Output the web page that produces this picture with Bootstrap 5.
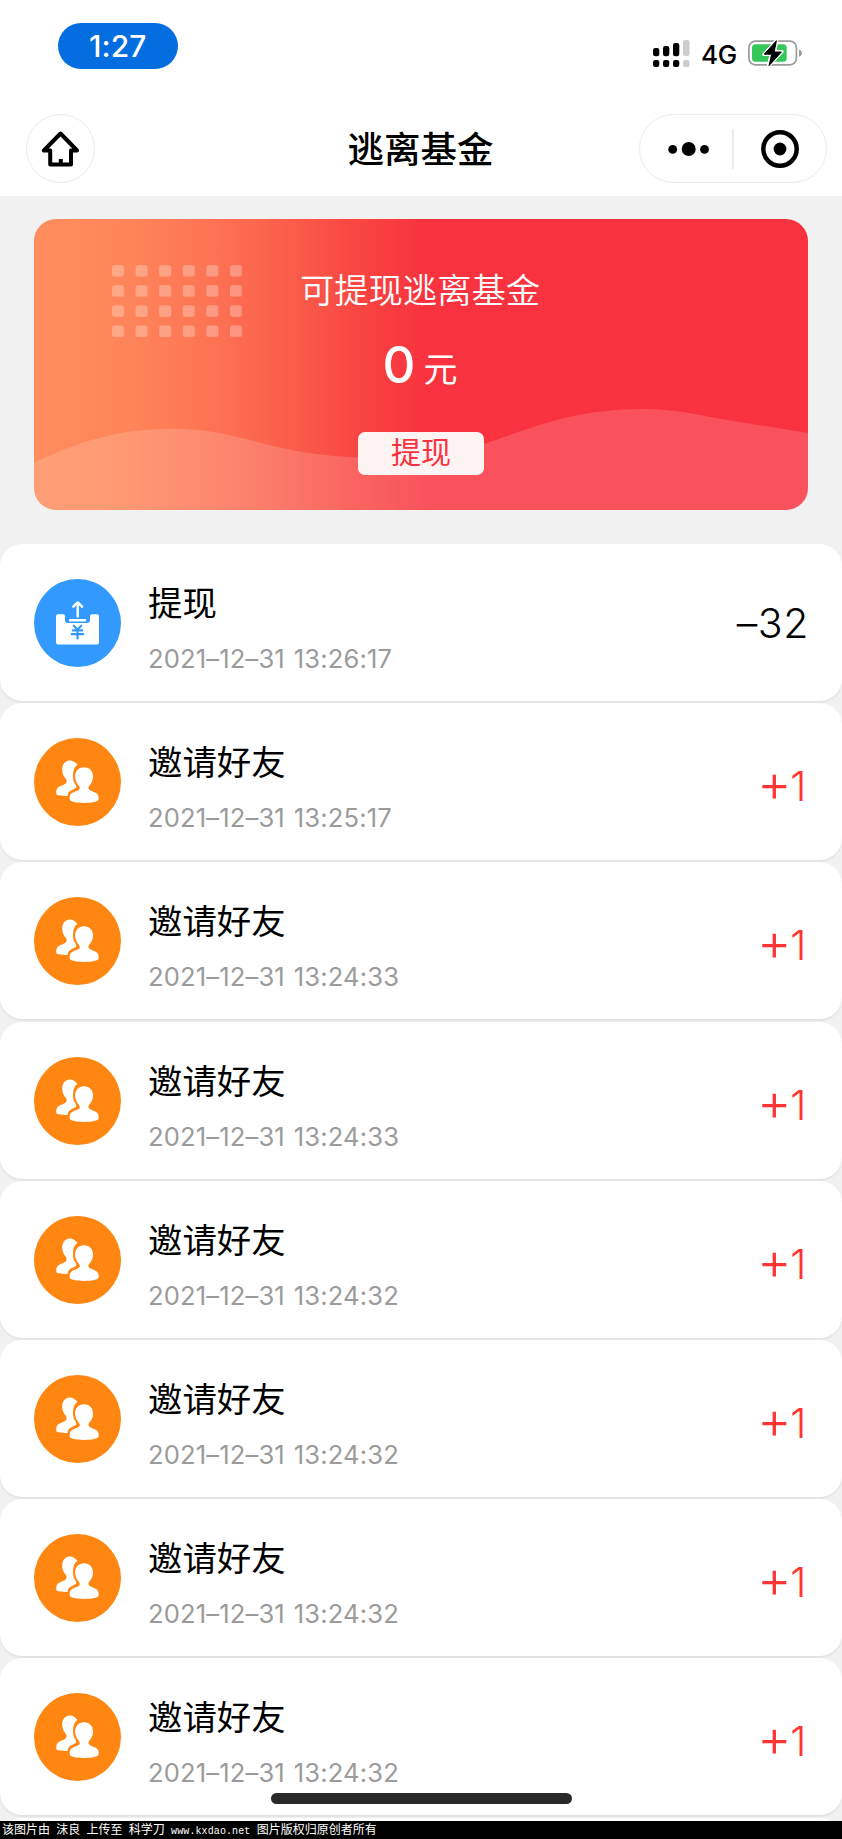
<!DOCTYPE html>
<html lang="zh-CN">
<head>
<meta charset="utf-8">
<meta name="viewport" content="width=device-width, initial-scale=1">
<title>逃离基金</title>
<link href="https://cdn.jsdelivr.net/npm/bootstrap@5.3.0/dist/css/bootstrap.min.css" rel="stylesheet">
<style>
body{font-family:Inter,"Noto Sans CJK SC",sans-serif;background:#f1f1f1;color:#000;line-height:1}
.screen{height:1839px}
.top-area{height:196px}
.status-row{height:92px;padding:23px 39px 0 58px}
.clock{width:119.5px;height:46px;border-radius:23px;background:#046de0;font-size:30px;font-weight:500;letter-spacing:.1px}
.status-icons{height:52px;padding-top:17px}
.net{font-size:26px;font-weight:500;width:36px;margin:0 11px 0 11px;letter-spacing:-.4px;line-height:28px;padding-top:1px}
.title-row{height:104px;padding:22px 15px 13px 26px}
.home-btn{width:69px;height:69px;border:1px solid #ebebeb}
.page-title{font-size:36.5px;font-weight:500;line-height:40px;margin:3px 12px 0 0}
.capsule{width:188px;height:69px;border:1px solid #ebebeb;border-radius:35px}
.side{width:188px}
.fund{margin:23px 34px 0;height:291px;border-radius:22px;background:linear-gradient(90deg,#ff8d5d 0%,#fe8559 12%,#fd7554 22%,#fa5d4b 33%,#f84341 43%,#f8323e 51%)}
.fund-body{padding-top:52px;color:#fff}
.fund-label{font-size:34.3px;line-height:40px;font-weight:350;margin-left:-2px}
.fund-sum{height:50px;margin-top:29px;margin-left:-2px}
.fund-num{font-size:51px;font-weight:550;line-height:50px;width:31px;letter-spacing:-1px}
.fund-unit{font-size:34px;line-height:40px;margin-left:10px;padding-top:10px}
.take{width:126px;height:43px;border-radius:7px;background:#fff4f4;color:#f8323f;font-size:30px;line-height:40px;margin-top:42px;padding:0 0 3px;border:0}
.take:hover{background:#fff;color:#f8323f}
.records{margin-top:34px;gap:2.2px}
.record{height:157px;flex:none;background:#fff;border-radius:22px;padding:35px 35px 0 34px;box-shadow:0 2px 2px rgba(0,0,0,.06)}
.avatar{width:87px;height:88px;flex:none}
.kind{font-size:34.4px;line-height:40px;margin:5px 0 0 27px}
.stamp{font-size:25.6px;font-weight:400;line-height:30px;color:#9b9b9b;margin:20px 0 0 27px;letter-spacing:.13px;word-spacing:1.5px}
.amount{font-size:41px;font-weight:300;line-height:50px;height:50px;margin-top:19px;margin-right:-2px;letter-spacing:.6px}
.plus .amount{color:#ff3434;margin-top:23px;margin-right:0}
.sign{font-size:53px;font-weight:300;line-height:40px;position:relative;top:1px;margin-right:-2px}
.home-bar{left:271px;top:1793px;width:301px;height:11px;border-radius:6px;background:#292929}
.credit{height:18px;left:0;bottom:0;background:#000;color:#fff;font-size:12px;line-height:18px;padding-left:2px;word-spacing:2.9px;white-space:nowrap}
.credit span{font-family:"Liberation Mono",monospace;font-size:10px;letter-spacing:.1px}
</style>
</head>
<body>
<svg width="0" height="0" class="position-absolute" aria-hidden="true">
  <symbol id="friends" viewBox="0 0 87 88">
    <ellipse cx="43.5" cy="44" rx="43.5" ry="44" fill="#ff8611"/>
    <path fill="#fff" d="M43.5 27C41.5 24 38.5 22.2 35.5 22.4C30.5 22.8 28 27 28.2 32C28.3 36 30 39 32 41C33 43 32.8 45 31 46C27.5 48 23 48.5 22.3 53V56C22.3 57.3 27 57.8 33.5 58C33.8 55 35 53.4 37.5 52.2L42.2 49.8C42.6 48 41.5 46.5 40 44.2C38.2 39 38.5 29.7 43.5 27Z"/>
    <path fill="#fff" d="M50.2 29.2C44.5 29.2 41 33.2 41.1 38.6C41.2 43 43 46 45.1 48C46.2 50 46 51.5 43.8 52.6C40.5 54.2 35.9 54.8 35.7 59.3V61.5C35.7 66 64.6 66 64.6 61.5V59.3C64.4 54.8 60 54.2 56.5 52.5C54.2 51.3 54 50 55 48C57.5 45.5 59 42.5 59 38.6C59 33.2 55.7 29.2 50.2 29.2Z"/>
  </symbol>
  <symbol id="withdraw" viewBox="0 0 87 88">
    <ellipse cx="43.5" cy="44" rx="43.5" ry="44" fill="#329aff"/>
    <path fill="#fff" d="M24 35.3H29Q31 35.3 31 37.3V41Q31 44 34 44H53Q56 44 56 41V37.3Q56 35.3 58 35.3H63Q65 35.3 65 37.3V63.4Q65 65.4 63 65.4H24Q22 65.4 22 63.4V37.3Q22 35.3 24 35.3Z"/>
    <path d="M35 41.3H52" stroke="#329aff" stroke-width="5"/>
    <path d="M36 41.3H51.2M43.7 37.5V24M39.3 27.7L43.7 23.4L48.1 27.7" fill="none" stroke="#fff" stroke-width="2.4" stroke-linecap="round" stroke-linejoin="round"/>
    <path d="M39.8 46.8L43.5 50.8L47.2 46.8M38.8 51.4H48.2M37.8 55.2H49.2M43.5 51V59.5" fill="none" stroke="#329aff" stroke-width="2.2" stroke-linecap="round"/>
  </symbol>
</svg>
<main class="screen position-relative overflow-hidden">
  <header class="top-area bg-white">
    <div class="status-row d-flex justify-content-between align-items-start">
      <div class="clock text-white d-flex align-items-center justify-content-center">1:27</div>
      <div class="status-icons d-flex align-items-start">
        <svg width="37" height="27" viewBox="0 0 37 27"><g><rect y="8" width="6.3" height="8.3" rx="2.3"/><rect x="10" y="6" width="6.3" height="10.3" rx="2.3"/><rect x="20" y="3" width="6.3" height="13.3" rx="2.3"/><rect y="20" width="6.3" height="7" rx="2.3"/><rect x="10" y="20" width="6.3" height="7" rx="2.3"/><rect x="20" y="20" width="6.3" height="7" rx="2.3"/></g><g fill="#ccc"><rect x="30" width="6.5" height="16" rx="2.3"/><rect x="30" y="20" width="6.5" height="7" rx="2.3"/></g></svg>
        <span class="net">4G</span>
        <svg width="55" height="27" viewBox="0 0 55 27"><rect x=".9" y="1.2" width="47.5" height="23.6" rx="6.5" fill="none" stroke="#9c9c9c" stroke-width="1.7"/><rect x="4" y="4.2" width="34.7" height="17.6" rx="3.5" fill="#35c75a"/><path d="M51 9.5C55 10.8 55 15.5 51 16.8Z" fill="#9c9c9c"/><path d="M28.8.2L15.8 14.5H23L20.3 26L34 11.6H26.8Z" stroke="#fff" stroke-width="3.2" stroke-linejoin="round"/><path d="M28.4.7L16.3 14.2H23.7L21 25.7L33.4 12H26.2Z" stroke="#000" stroke-width="1" stroke-linejoin="round"/></svg>
      </div>
    </div>
    <div class="title-row d-flex justify-content-between align-items-start">
      <div class="side"><div class="home-btn rounded-circle d-flex align-items-center justify-content-center">
        <svg width="40" height="36" viewBox="0 0 40 36"><path d="M19.5 2.5L2.9 19.5H9.2V33.5H30V19.5H36.1Z" fill="none" stroke="#000" stroke-width="4" stroke-linejoin="round"/><path d="M17.8 28h4v6h-4z"/></svg>
      </div></div>
      <h1 class="page-title align-self-center">逃离基金</h1>
      <div class="capsule d-flex align-items-center">
        <svg width="186" height="67" viewBox="0 0 186 67"><circle cx="32.7" cy="34.4" r="4.4"/><circle cx="48.7" cy="34" r="7"/><circle cx="64.5" cy="34.4" r="4.4"/><path d="M93 14V54" stroke="#e5e5e5" stroke-width="1.5"/><circle cx="140" cy="34" r="16.7" fill="none" stroke="#000" stroke-width="4.5"/><circle cx="140" cy="34" r="6.4"/></svg>
      </div>
    </div>
  </header>

  <section class="fund position-relative overflow-hidden">
    <svg class="position-absolute top-0 start-0" width="774" height="292" viewBox="0 0 774 292">
      <defs><pattern id="dots" x="78" y="46" width="23.6" height="20.15" patternUnits="userSpaceOnUse"><rect width="12" height="11.6" rx="2.4" fill="#fff" fill-opacity=".28"/></pattern></defs>
      <rect x="78" y="46" width="130.2" height="72.2" fill="url(#dots)"/>
      <path d="M0 244C45 221 90 209.7 136 209.7C165 209 190 214 216 221C250 230 275 236 316 238C365 241 405 240 450 225C500 208 540 190 610 190C640 190 662 195.5 687 200L774 214V292H0Z" fill="#fff" fill-opacity=".16"/>
    </svg>
    <div class="fund-body position-relative d-flex flex-column align-items-center">
      <div class="fund-label">可提现逃离基金</div>
      <div class="fund-sum d-flex align-items-start"><span class="fund-num">0</span><span class="fund-unit">元</span></div>
      <button class="take btn">提现</button>
    </div>
  </section>

  <section class="records d-flex flex-column">
    <article class="record d-flex"><svg class="avatar"><use href="#withdraw"/></svg><div class="flex-grow-1"><div class="kind">提现</div><div class="stamp">2021–12–31 13:26:17</div></div><div class="amount">–32</div></article>
    <article class="record plus d-flex"><svg class="avatar"><use href="#friends"/></svg><div class="flex-grow-1"><div class="kind">邀请好友</div><div class="stamp">2021–12–31 13:25:17</div></div><div class="amount"><span class="sign">+</span>1</div></article>
    <article class="record plus d-flex"><svg class="avatar"><use href="#friends"/></svg><div class="flex-grow-1"><div class="kind">邀请好友</div><div class="stamp">2021–12–31 13:24:33</div></div><div class="amount"><span class="sign">+</span>1</div></article>
    <article class="record plus d-flex"><svg class="avatar"><use href="#friends"/></svg><div class="flex-grow-1"><div class="kind">邀请好友</div><div class="stamp">2021–12–31 13:24:33</div></div><div class="amount"><span class="sign">+</span>1</div></article>
    <article class="record plus d-flex"><svg class="avatar"><use href="#friends"/></svg><div class="flex-grow-1"><div class="kind">邀请好友</div><div class="stamp">2021–12–31 13:24:32</div></div><div class="amount"><span class="sign">+</span>1</div></article>
    <article class="record plus d-flex"><svg class="avatar"><use href="#friends"/></svg><div class="flex-grow-1"><div class="kind">邀请好友</div><div class="stamp">2021–12–31 13:24:32</div></div><div class="amount"><span class="sign">+</span>1</div></article>
    <article class="record plus d-flex"><svg class="avatar"><use href="#friends"/></svg><div class="flex-grow-1"><div class="kind">邀请好友</div><div class="stamp">2021–12–31 13:24:32</div></div><div class="amount"><span class="sign">+</span>1</div></article>
    <article class="record plus d-flex"><svg class="avatar"><use href="#friends"/></svg><div class="flex-grow-1"><div class="kind">邀请好友</div><div class="stamp">2021–12–31 13:24:32</div></div><div class="amount"><span class="sign">+</span>1</div></article>
    <article class="record"></article>
  </section>

  <div class="home-bar position-absolute"></div>
  <footer class="credit position-absolute w-100">该图片由 沫良 上传至 科学刀 <span>www.kxdao.net</span> 图片版权归原创者所有</footer>
</main>
<script src="https://cdn.jsdelivr.net/npm/bootstrap@5.3.0/dist/js/bootstrap.bundle.min.js"></script>
</body>
</html>
